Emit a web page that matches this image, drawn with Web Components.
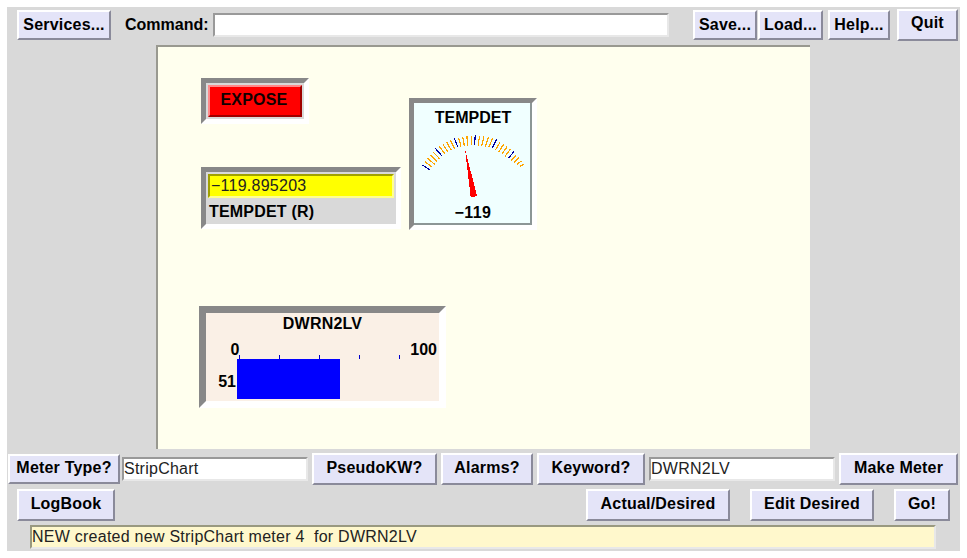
<!doctype html>
<html><head><meta charset="utf-8">
<style>
html,body{margin:0;padding:0;background:#fff}
body{width:967px;height:558px;overflow:hidden}
</style></head><body>
<tk-app></tk-app>
<script>
const FONT='"Liberation Sans",Arial,sans-serif';
function el(name,html,css){customElements.define(name,class extends HTMLElement{
 constructor(){super();const r=this.attachShadow({mode:'open'});r.innerHTML='<style>'+css+'</style>'+html;}
});}
el('tk-btn','<slot></slot>',`:host{display:flex;box-sizing:border-box;align-items:center;justify-content:center;height:30px;background:#e4e4f8;border:2px solid;border-color:#fff #8a8a9a #8a8a9a #fff;font:bold 16px ${FONT};letter-spacing:.2px;color:#000;white-space:nowrap;flex:none;padding-bottom:1px}
:host([tall]){height:32px}`);
el('tk-entry','<slot></slot>',`:host{display:flex;box-sizing:border-box;align-items:center;height:24px;background:#fff;border:2px solid;border-color:#999 #e8e8e8 #e8e8e8 #999;font:16px ${FONT};letter-spacing:.25px;color:#222;white-space:nowrap;flex:none;padding-bottom:1px}`);
el('tk-label','<slot></slot>',`:host{display:block;font:bold 16px ${FONT};letter-spacing:0;color:#000;white-space:nowrap;flex:none;padding-bottom:1px}`);
el('tk-frame','<slot></slot>',`:host{display:block;position:absolute;box-sizing:border-box;border-style:solid;border-color:#888 #fff #fff #888;border-width:5px}`);
el('tk-expose','<slot></slot>',`:host{display:flex;box-sizing:border-box;align-items:center;justify-content:center;height:100%;background:red;border:2px solid;border-color:#ff8a8a #a00000 #a00000 #ff8a8a;font:bold 16px ${FONT};letter-spacing:.2px;color:#100;padding:0 2px 2px 0}`);
el('tk-dial',`<div class="t">TEMPDET</div>
<svg width="116" height="75" viewBox="414 127 116 75" id="s" shape-rendering="crispEdges"></svg>
<div class="v">−119</div>`,`:host{display:flex;flex-direction:column;align-items:center;box-sizing:border-box;height:100%;background:#f0ffff;border-bottom:2px solid #8c9696;border-right:2px solid #8c9696;font:bold 16px ${FONT};color:#000}
.t{margin-top:4px;height:20px;line-height:22px;letter-spacing:0;margin-left:2px}svg{display:block;flex:none}.v{height:20px;line-height:22px;letter-spacing:.4px;margin-left:2px}`);
el('tk-strip',`<div class="t">DWRN2LV</div>
<svg width="233" height="66" viewBox="0 0 233 66">
<rect x="31" y="24" width="103" height="40" fill="#00f"/>
<path d="M33.5 20v4M73.5 20v4M113.5 20v4M153.5 20v4M193.5 20v4" stroke="#00c" fill="none"/>
<text x="29" y="20" text-anchor="middle">0</text><text x="231" y="20" text-anchor="end">100</text><text x="30" y="52" text-anchor="end">51</text>
</svg>`,`:host{display:block;height:100%;background:#faf0e6;font:bold 16px ${FONT};color:#000}.t{height:22px;line-height:21px;text-align:center;letter-spacing:.2px}svg{display:block}text{font:bold 16px ${FONT};fill:#000}`);
customElements.define('tk-readout',class extends HTMLElement{constructor(){super();this.attachShadow({mode:'open'}).innerHTML=`<style>:host{display:block;height:100%;background:#d9d9d9;padding:2px;box-sizing:border-box;font:bold 16px ${FONT}}
.y{box-sizing:border-box;height:24px;width:186px;background:#ff0;border:2px solid;border-color:#a0a000 #ffff90 #ffff90 #a0a000;font:16px ${FONT};letter-spacing:.25px;color:#222;line-height:20px;padding-left:1px;white-space:nowrap}.l{padding-left:1px;height:24px;line-height:28px;letter-spacing:.2px}</style><div class="y">−119.895203</div><div class="l">TEMPDET (R)</div>`}});
customElements.define('tk-app',class extends HTMLElement{constructor(){super();this.attachShadow({mode:'open'}).innerHTML=`<style>
:host{display:block;position:absolute;left:7px;top:7px;width:953px;height:544px;background:#d9d9d9;box-sizing:border-box}
.r{display:flex;align-items:center}
.r1{height:34px;padding-left:10px;margin-top:1px}
.canvas{position:relative;box-sizing:border-box;margin:3px 0 0 149px;width:654px;height:404px;background:#ffffee;border-top:2px solid #999990;border-left:2px solid #999990}
.r2{height:32px;margin-top:4px;padding-left:1px}
.r3{height:32px;margin-top:4px;padding-left:10px}
.msg{box-sizing:border-box;margin:4px 0 0 23px;width:906px;height:24px;background:#fff8cc;border:2px solid;border-color:#999980 #e8e8e8 #e8e8e8 #999980;font:16px ${FONT};letter-spacing:.25px;color:#222;line-height:19px;white-space:pre}
</style>
<div class="r r1"><tk-btn style="width:94px">Services...</tk-btn><tk-label style="margin-left:14px;width:88px">Command:</tk-label><tk-entry style="width:456px"></tk-entry>
<tk-btn style="width:64px;margin-left:24px">Save...</tk-btn><tk-btn style="width:65px;margin-left:1px">Load...</tk-btn><tk-btn style="width:62px;margin-left:5px">Help...</tk-btn><tk-btn tall style="width:61px;margin-left:7px;padding-bottom:4px">Quit</tk-btn></div>
<div class="canvas">
<tk-frame style="left:43px;top:31px;width:108px;height:46px;padding:2px;background:#d9d9d9"><tk-expose>EXPOSE</tk-expose></tk-frame>
<tk-frame style="left:43px;top:120px;width:200px;height:62px"><tk-readout></tk-readout></tk-frame>
<tk-frame style="left:251px;top:51px;width:128px;height:132px"><tk-dial></tk-dial></tk-frame>
<tk-frame style="left:41px;top:259px;width:247px;height:102px;border-width:7px"><tk-strip></tk-strip></tk-frame>
</div>
<div class="r r2"><tk-btn style="width:112px;padding-bottom:2px">Meter Type?</tk-btn><tk-entry style="width:186px;margin-left:2px">StripChart</tk-entry><tk-btn tall style="width:125px;margin-left:4px;padding-bottom:3px">PseudoKW?</tk-btn><tk-btn tall style="width:92px;margin-left:4px;padding-bottom:3px">Alarms?</tk-btn><tk-btn tall style="width:108px;margin-left:4px;padding-bottom:3px">Keyword?</tk-btn><tk-entry style="width:186px;margin-left:4px">DWRN2LV</tk-entry><tk-btn tall style="width:119px;margin-left:4px;padding-bottom:3px">Make Meter</tk-btn></div>
<div class="r r3"><tk-btn tall style="width:98px;padding-bottom:3px">LogBook</tk-btn><tk-btn tall style="width:144px;margin-left:471px;padding-bottom:3px">Actual/Desired</tk-btn><tk-btn tall style="width:124px;margin-left:20px;padding-bottom:3px">Edit Desired</tk-btn><tk-btn tall style="width:56px;margin-left:20px;padding-bottom:3px">Go!</tk-btn></div>
<div class="msg">NEW created new StripChart meter 4  for DWRN2LV</div>`;
}});
// dial scale: measured major ticks, outer and inner ends, with four minor ticks between each pair
(function(){
 const s=document.querySelector('tk-app').shadowRoot.querySelector('tk-dial').shadowRoot.getElementById('s');
 const M=[[422.3,165,430,170],[435.3,148.3,442,156],[454.3,138.3,457.7,146.7],[475.3,135,474.5,145],[497,139,492.3,147.7],[514,151.5,508.3,158.3],[526.5,167,522.5,168.8]];
 let h='';
 const line=(p,c)=>`<line x1="${p[0].toFixed(1)}" y1="${p[1].toFixed(1)}" x2="${p[2].toFixed(1)}" y2="${p[3].toFixed(1)}" stroke="${c}" stroke-width="1.2"/>`;
 for(let i=0;i<M.length-1;i++){
  for(let k=1;k<5;k++){const t=k/5;h+=line(M[i].map((v,j)=>v+(M[i+1][j]-v)*t),'#ffa500');}
 }
 for(let i=0;i<M.length-1;i++)h+=line(M[i],'#0000a0');
 h+='<polygon points="465,149 470.7,197.5 477,196" fill="#f00"/>';
 s.innerHTML=h;
})();
</script></body></html>
